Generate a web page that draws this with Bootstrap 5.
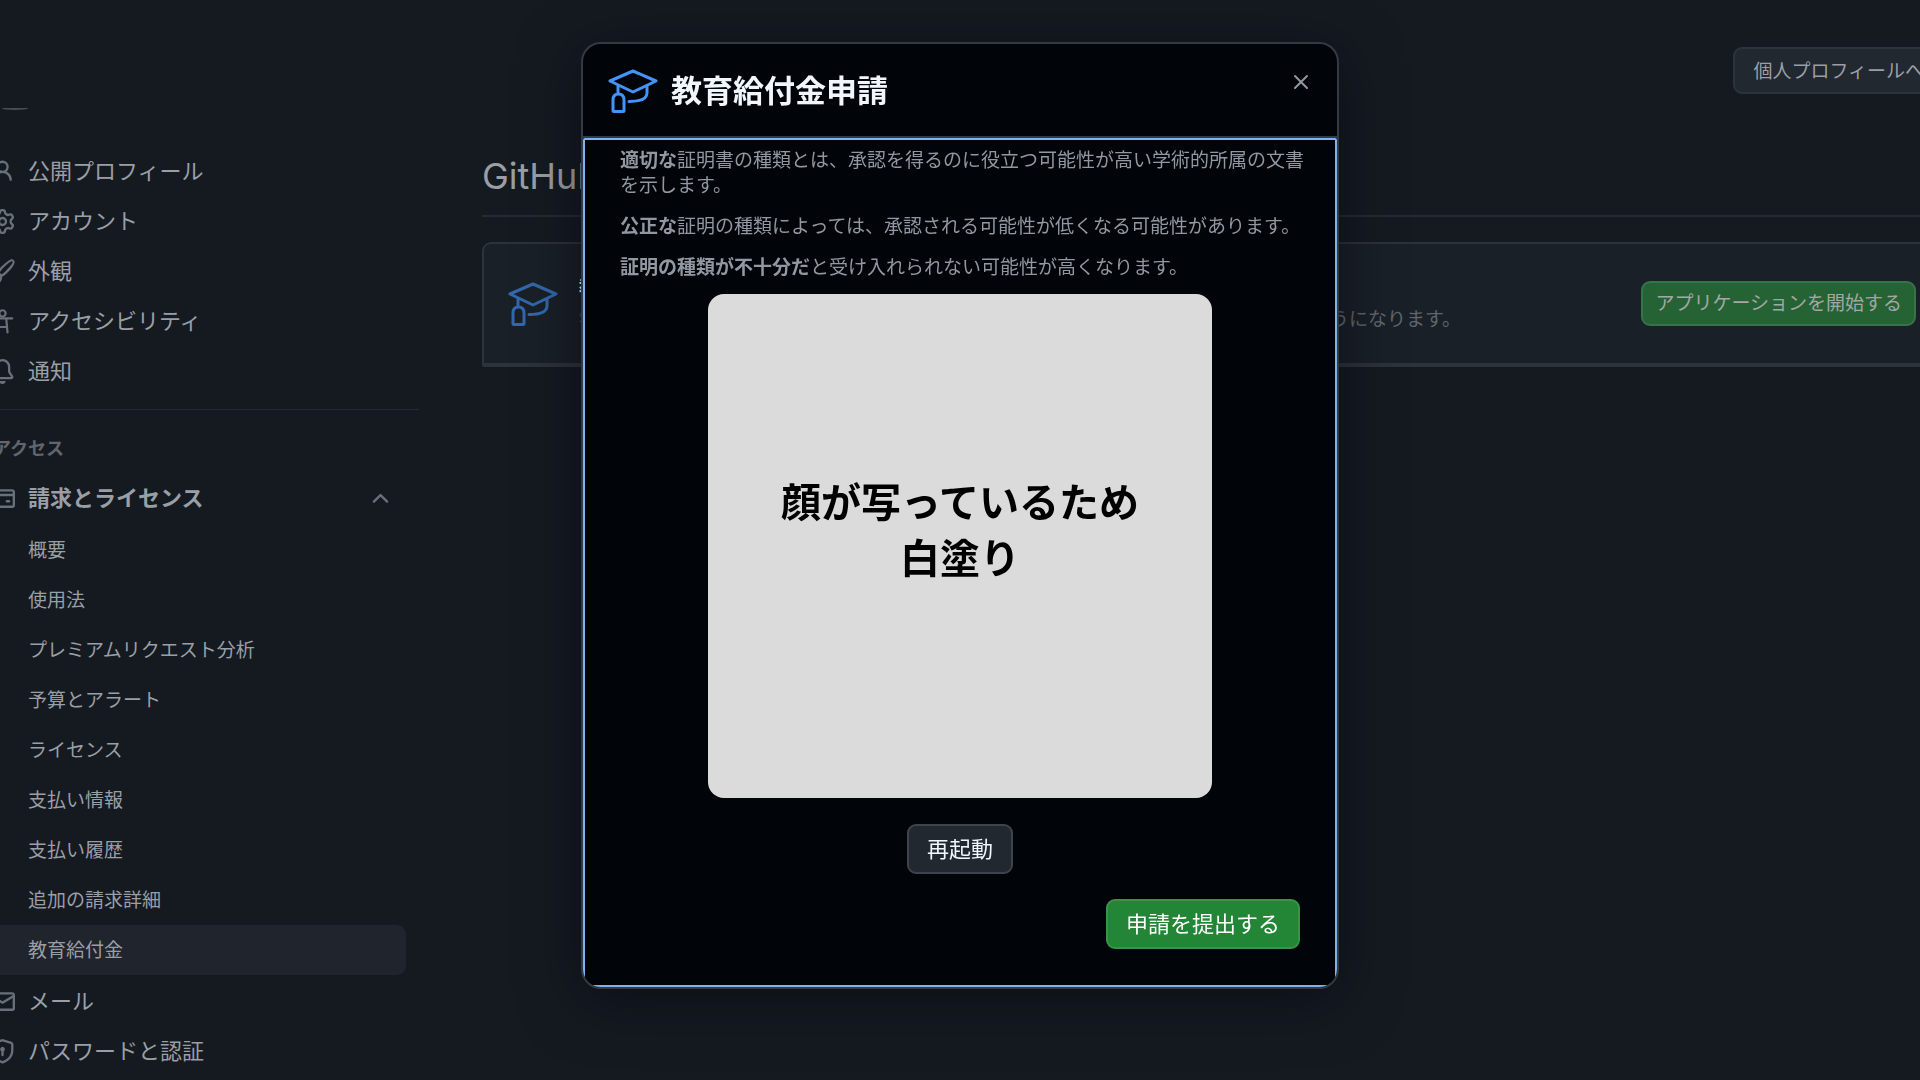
<!DOCTYPE html>
<html lang="ja" data-bs-theme="dark">
<head>
<meta charset="utf-8">
<meta name="viewport" content="width=device-width, initial-scale=1">
<title>教育給付金申請</title>
<link href="https://cdn.jsdelivr.net/npm/bootstrap@5.3.0/dist/css/bootstrap.min.css" rel="stylesheet">
<style>
body{background:#151a21;color:#9a9fa6;font-family:Inter,"Noto Sans CJK JP",sans-serif;font-size:19px;line-height:25px;height:100vh;overflow:hidden}
.settings-shell{height:100vh;overflow:hidden}
.side-col{width:419px;padding-top:107px}
.avatar-edge{width:26px;height:3px;margin-left:2px;border-radius:50%;border-bottom:2px solid #4a4d4c}
.side-nav{margin-top:36px}
.side-link{display:flex;align-items:center;height:50px;gap:13px;color:#9a9fa6;font-size:22px;text-decoration:none;white-space:nowrap;margin-right:13px;border-radius:0 9px 9px 0}
.side-link svg{width:25px;height:25px;margin-left:-10px;flex:none;fill:#6a7078}
.side-sub{padding:2px 0 1px}
.side-sub .side-link{font-size:19px;padding-left:28px}
.side-link.active{background:#20242c}
.side-link svg.chev{margin:0 13px 0 auto}
.side-rule{border-top:1px solid #262b33;margin-top:13px}
.side-label{font-size:18px;font-weight:700;color:#60666e;margin:26px 0 12px -7px}
.main-col{padding-left:63px;min-width:0}
.top-row{height:94px}
.btn-grey{background:#212830;border:2px solid #2d333b;border-radius:9px;color:#9a9fa6;font-size:19px;line-height:25px}
.profile-btn{padding:10px 18px 8px;margin-right:-62px}
.page-title{font-size:36px;line-height:48px;font-weight:400;color:#9a9fa6;margin:58px 0 0;padding-bottom:15px;border-bottom:2px solid #262b33}
.benefit{margin:25px -20px 0 0;height:125px;background:#1a2028;border:2px solid #2d323b;border-bottom-width:4px;border-radius:9px 0 0 2px;padding:0 22px 0 23px}
.benefit .cap{stroke:#3268ac}
.benefit h2{font-size:19px;line-height:25px;font-weight:700;margin:0 0 7px}
.benefit p{margin:0;color:#60666e;white-space:nowrap}
.start-btn{background:#266334;border:2px solid #38724a;border-radius:9px;color:#a3a8a4;font-size:19px;line-height:25px;padding:8px 12px}
.cap{width:52px;height:46px;fill:none;stroke:#4493f8;stroke-width:3;stroke-linecap:round;stroke-linejoin:round;flex:none}
.apply .modal-dialog{max-width:758px;margin:42px auto}
.apply .modal-content{background:#010409;border:2px solid #343a42;border-radius:20px;overflow:hidden;box-shadow:0 10px 60px rgba(1,4,9,.5)}
.apply .modal-header{padding:24px 22px 22px 24px;border-bottom:2px solid #343a42;align-items:flex-start;border-radius:0}
.apply .modal-title{font-size:31px;line-height:46px;font-weight:700;color:#f0f6fc}
.close-btn{background:none;border:0;padding:5px;display:flex}
.close-btn svg{width:18px;height:18px;stroke:#9198a1;stroke-width:2;stroke-linecap:round}
.apply .modal-body{border:2px solid #7fb2ee;border-radius:2px 2px 0 0;padding:8px 35px 36px;color:#9198a1}
.apply .modal-body p{margin:0 -6px 16px 0}
.photo{width:504px;height:504px;border-radius:16px;background:#dbdbdb;color:#000;font-size:40px;line-height:56px;font-weight:700;padding-bottom:30px;margin:-2px auto 26px}
.apply .btn-grey,.submit-btn{font-size:22px;line-height:28px;padding:9px 18px}
.apply .btn-grey{color:#f0f6fc;border-color:#3d444d}
.submit-btn{background:#238636;border:2px solid #3a9349;border-radius:9px;color:#fff}
.submit-row{padding-top:25px}
</style>
<script src="https://cdn.jsdelivr.net/npm/bootstrap@5.3.0/dist/js/bootstrap.bundle.min.js"></script>
</head>
<body>
<svg class="d-none"><symbol id="capIcon" viewBox="0 0 52 46"><path d="M26 3 49 13 26 24 3 13ZM11 17V26M40 18V25C40 31 34 33.500 22 33.500M6 42.500V32C6 28 8 26 11.500 26S17 28 17 32V42.500Q17 43.500 16 43.500H7Q6 43.500 6 42.500Z"/></symbol></svg>
<div class="settings-shell d-flex">
  <aside class="side-col flex-shrink-0">
    <div class="avatar-edge"></div>
    <nav class="side-nav" aria-label="設定">
      <a class="side-link" href="#"><svg viewBox="0 0 16 16"><path d="M10.561 8.073a6 6 0 0 1 3.432 5.142.75.75 0 1 1-1.498.07 4.500 4.500 0 0 0-8.990 0 .75.75 0 0 1-1.498-.07 6 6 0 0 1 3.431-5.142 3.999 3.999 0 1 1 5.123 0ZM10.500 5a2.500 2.500 0 1 0-5 0 2.500 2.500 0 0 0 5 0Z"/></svg>公開プロフィール</a>
      <a class="side-link" href="#"><svg viewBox="0 0 16 16"><path d="M8 0a8.200 8.200 0 0 1 .701.031C9.444.095 9.990.645 10.160 1.290l.288 1.107c.018.066.079.158.212.224.231.114.454.243.668.386.123.082.233.090.299.071l1.103-.303c.644-.176 1.392.021 1.820.630.270.385.506.792.704 1.218.315.675.111 1.422-.364 1.891l-.814.806c-.049.048-.098.147-.088.294.016.257.016.515 0 .772-.010.147.038.246.088.294l.814.806c.475.469.679 1.216.364 1.891a7.977 7.977 0 0 1-.704 1.217c-.428.610-1.176.807-1.820.630l-1.102-.302c-.067-.019-.177-.011-.300.071a5.909 5.909 0 0 1-.668.386c-.133.066-.194.158-.211.224l-.290 1.106c-.168.646-.715 1.196-1.458 1.260a8.006 8.006 0 0 1-1.402 0c-.743-.064-1.289-.614-1.458-1.260l-.289-1.106c-.018-.066-.079-.158-.212-.224a5.738 5.738 0 0 1-.668-.386c-.123-.082-.233-.090-.299-.071l-1.103.303c-.644.176-1.392-.021-1.820-.630a8.120 8.120 0 0 1-.704-1.218c-.315-.675-.111-1.422.363-1.891l.815-.806c.050-.048.098-.147.088-.294a6.214 6.214 0 0 1 0-.772c.010-.147-.038-.246-.088-.294l-.815-.806C.635 6.045.431 5.298.746 4.623a7.920 7.920 0 0 1 .704-1.217c.428-.610 1.176-.807 1.820-.630l1.102.302c.067.019.177.011.300-.071.214-.143.437-.272.668-.386.133-.066.194-.158.211-.224l.290-1.106C6.009.645 6.556.095 7.299.031 7.530.010 7.764 0 8 0Zm-.571 1.525c-.036.003-.108.036-.137.146l-.289 1.105c-.147.561-.549.967-.998 1.189-.173.086-.340.183-.500.290-.417.278-.970.423-1.529.270l-1.103-.303c-.109-.030-.175.016-.195.045-.220.312-.412.644-.573.990-.014.031-.021.110.059.190l.815.806c.411.406.562.957.530 1.456a4.709 4.709 0 0 0 0 .582c.032.499-.119 1.050-.530 1.456l-.815.806c-.081.080-.073.159-.059.190.162.346.353.677.573.989.020.030.085.076.195.046l1.102-.303c.560-.153 1.113-.008 1.530.270.161.107.328.204.501.290.447.222.850.629.997 1.189l.289 1.105c.029.109.101.143.137.146a6.600 6.600 0 0 0 1.142 0c.036-.003.108-.036.137-.146l.289-1.105c.147-.561.549-.967.998-1.189.173-.086.340-.183.500-.290.417-.278.970-.423 1.529-.270l1.103.303c.109.029.175-.016.195-.045.220-.313.411-.644.573-.990.014-.031.021-.110-.059-.190l-.815-.806c-.411-.406-.562-.957-.530-1.456a4.709 4.709 0 0 0 0-.582c-.032-.499.119-1.050.530-1.456l.815-.806c.081-.080.073-.159.059-.190a6.464 6.464 0 0 0-.573-.989c-.020-.030-.085-.076-.195-.046l-1.102.303c-.560.153-1.113.008-1.530-.270a4.440 4.440 0 0 0-.501-.290c-.447-.222-.850-.629-.997-1.189l-.289-1.105c-.029-.110-.101-.143-.137-.146a6.600 6.600 0 0 0-1.142 0ZM11 8a3 3 0 1 1-6 0 3 3 0 0 1 6 0ZM9.500 8a1.500 1.500 0 1 0-3.001.001A1.500 1.500 0 0 0 9.500 8Z"/></svg>アカウント</a>
      <a class="side-link" href="#"><svg viewBox="0 0 16 16"><path d="M11.134 1.535c.7-.509 1.416-.942 2.076-1.155.649-.210 1.463-.267 2.069.340.603.601.568 1.411.368 2.070-.202.668-.624 1.390-1.125 2.096-1.011 1.424-2.496 2.987-3.775 4.249-1.098 1.084-2.132 1.839-3.040 2.300a3.744 3.744 0 0 1-1.055 3.217c-.431.431-1.065.691-1.657.861-.614.177-1.294.287-1.914.357A21.150 21.150 0 0 1 .797 16H.750L0 15.250V15.200a21.700 21.700 0 0 1 .130-2.284c.070-.620.180-1.300.357-1.914.170-.592.430-1.226.861-1.657a3.746 3.746 0 0 1 3.228-1.056c.464-.900 1.213-1.920 2.284-3.012 1.258-1.284 2.836-2.740 4.274-3.742ZM2.400 10.400c-.300.300-.620 1.500-.860 4.060 2.560-.240 3.760-.560 4.060-.860a2.250 2.250 0 1 0-3.200-3.200ZM7.200 9.800c.780-.350 1.780-1.050 2.900-2.180 1.240-1.230 2.670-2.740 3.620-4.070.470-.670.980-1.600.680-1.950-.400-.300-1.320.200-2 .680-1.330.960-2.900 2.400-4.100 3.640-1 1-1.780 2.080-2.200 2.900.500.200.900.600 1.100.980Z"/></svg>外観</a>
      <a class="side-link" href="#"><svg viewBox="0 0 16 16"><g fill="none" stroke="#6a7078" stroke-width="1.400" stroke-linecap="round" stroke-linejoin="round"><circle cx="8" cy="2.800" r="2"/><path d="M1.800 6H14.200M5.600 6.200 4.800 15M10.400 6.200 11.200 15M5.200 11.500H10.800"/></g></svg>アクセシビリティ</a>
      <a class="side-link" href="#"><svg viewBox="0 0 16 16"><path d="M8 16a2 2 0 0 0 1.985-1.750c.017-.137-.097-.250-.235-.250h-3.500c-.138 0-.252.113-.235.250A2 2 0 0 0 8 16ZM3 5a5 5 0 0 1 10 0v2.947c0 .050.015.098.042.139l1.703 2.555A1.519 1.519 0 0 1 13.482 13H2.518a1.516 1.516 0 0 1-1.263-2.360l1.703-2.554A.255.255 0 0 0 3 7.947Zm5-3.500A3.500 3.500 0 0 0 4.500 5v2.947c0 .346-.102.683-.294.970l-1.703 2.556a.017.017 0 0 0 .015.027h10.964a.017.017 0 0 0 .015-.027l-1.703-2.556a1.745 1.745 0 0 1-.294-.970V5A3.500 3.500 0 0 0 8 1.500Z"/></svg>通知</a>
      <div class="side-rule"></div>
      <div class="side-label">アクセス</div>
      <a class="side-link fw-bold" href="#" aria-expanded="true"><svg viewBox="0 0 16 16"><path d="M10.750 9a.75.75 0 0 0 0 1.500h1.500a.75.75 0 0 0 0-1.500h-1.500ZM0 3.750C0 2.784.784 2 1.750 2h12.500c.966 0 1.750.784 1.750 1.750v8.500A1.750 1.750 0 0 1 14.250 14H1.750A1.750 1.750 0 0 1 0 12.250ZM14.500 6.500h-13v5.750c0 .138.112.250.250.250h12.500a.250.250 0 0 0 .250-.250Zm0-2.750a.250.250 0 0 0-.250-.250H1.750a.250.250 0 0 0-.250.250V5h13Z"/></svg>請求とライセンス<svg class="chev" viewBox="0 0 16 16"><path d="M3.220 10.530a.749.749 0 0 1 0-1.060l4.250-4.250a.749.749 0 0 1 1.060 0l4.250 4.250a.749.749 0 1 1-1.060 1.060L8 6.811 4.280 10.530a.749.749 0 0 1-1.060 0Z"/></svg></a>
      <div class="side-sub">
        <a class="side-link" href="#">概要</a>
        <a class="side-link" href="#">使用法</a>
        <a class="side-link" href="#">プレミアムリクエスト分析</a>
        <a class="side-link" href="#">予算とアラート</a>
        <a class="side-link" href="#">ライセンス</a>
        <a class="side-link" href="#">支払い情報</a>
        <a class="side-link" href="#">支払い履歴</a>
        <a class="side-link" href="#">追加の請求詳細</a>
        <a class="side-link active" href="#" aria-current="page">教育給付金</a>
      </div>
      <a class="side-link" href="#"><svg viewBox="0 0 16 16"><path d="M1.750 2h12.500c.966 0 1.750.784 1.750 1.750v8.500A1.750 1.750 0 0 1 14.250 14H1.750A1.750 1.750 0 0 1 0 12.250v-8.500C0 2.784.784 2 1.750 2ZM1.500 12.251c0 .138.112.250.250.250h12.500a.250.250 0 0 0 .250-.250V5.809L8.380 9.397a.75.75 0 0 1-.760 0L1.500 5.809v6.442Zm13-8.181v-.320a.250.250 0 0 0-.250-.250H1.750a.250.250 0 0 0-.250.250v.320L8 7.880Z"/></svg>メール</a>
      <a class="side-link" href="#"><svg viewBox="0 0 16 16"><path d="M8.533.133l5.250 1.680A1.750 1.750 0 0 1 15 3.480V7c0 1.566-.320 3.182-1.303 4.682-.983 1.498-2.585 2.813-5.032 3.855a1.697 1.697 0 0 1-1.330 0c-2.447-1.042-4.049-2.357-5.032-3.855C1.320 10.182 1 8.566 1 7V3.480a1.755 1.755 0 0 1 1.217-1.667l5.250-1.680a1.748 1.748 0 0 1 1.066 0Zm-.610 1.429-5.250 1.680a.251.251 0 0 0-.173.238V7c0 1.360.275 2.666 1.057 3.859.784 1.194 2.121 2.342 4.366 3.298a.196.196 0 0 0 .154 0c2.245-.957 3.582-2.103 4.366-3.297C13.225 9.666 13.500 8.358 13.500 7V3.480a.250.250 0 0 0-.174-.238l-5.250-1.680a.250.250 0 0 0-.153 0ZM9.500 6.500c0 .536-.286 1.032-.750 1.300v2.450a.75.75 0 0 1-1.500 0V7.800A1.500 1.500 0 1 1 9.500 6.500Z"/></svg>パスワードと認証</a>
    </nav>
  </aside>
  <main class="main-col flex-grow-1">
    <div class="top-row d-flex justify-content-end align-items-end"><button type="button" class="btn btn-grey profile-btn text-nowrap">個人プロフィールへ移動</button></div>
    <h1 class="page-title">GitHub Education</h1>
    <section class="benefit d-flex align-items-center">
      <svg class="cap" aria-hidden="true"><use href="#capIcon"/></svg>
      <div class="ms-3 ps-1"><h2>教育給付金</h2><p>学生や教員の方は、申請が承認されるとGitHub 特典や各種ツールを無料で利用できるようになります。</p></div>
      <button type="button" class="btn start-btn ms-auto text-nowrap">アプリケーションを開始する</button>
    </section>
  </main>
</div>
<div class="modal apply d-block" tabindex="-1" role="dialog" aria-labelledby="applyTitle">
  <div class="modal-dialog">
    <div class="modal-content">
      <div class="modal-header">
        <svg class="cap" aria-hidden="true"><use href="#capIcon"/></svg>
        <h2 class="modal-title ms-2 ps-1" id="applyTitle">教育給付金申請</h2>
        <button type="button" class="close-btn ms-auto" aria-label="閉じる"><svg viewBox="0 0 18 18"><path d="M3 3 15 15M15 3 3 15"/></svg></button>
      </div>
      <div class="modal-body">
        <p><strong>適切な</strong>証明書の種類とは、承認を得るのに役立つ可能性が高い学術的所属の文書を示します。</p>
        <p><strong>公正な</strong>証明の種類によっては、承認される可能性が低くなる可能性があります。</p>
        <p><strong>証明の種類が不十分だ</strong>と受け入れられない可能性が高くなります。</p>
        <div class="photo d-flex align-items-center justify-content-center text-center">顔が写っているため<br>白塗り</div>
        <div class="d-flex justify-content-center"><button type="button" class="btn btn-grey">再起動</button></div>
        <div class="submit-row d-flex justify-content-end"><button type="button" class="btn submit-btn">申請を提出する</button></div>
      </div>
    </div>
  </div>
</div>
</body>
</html>
